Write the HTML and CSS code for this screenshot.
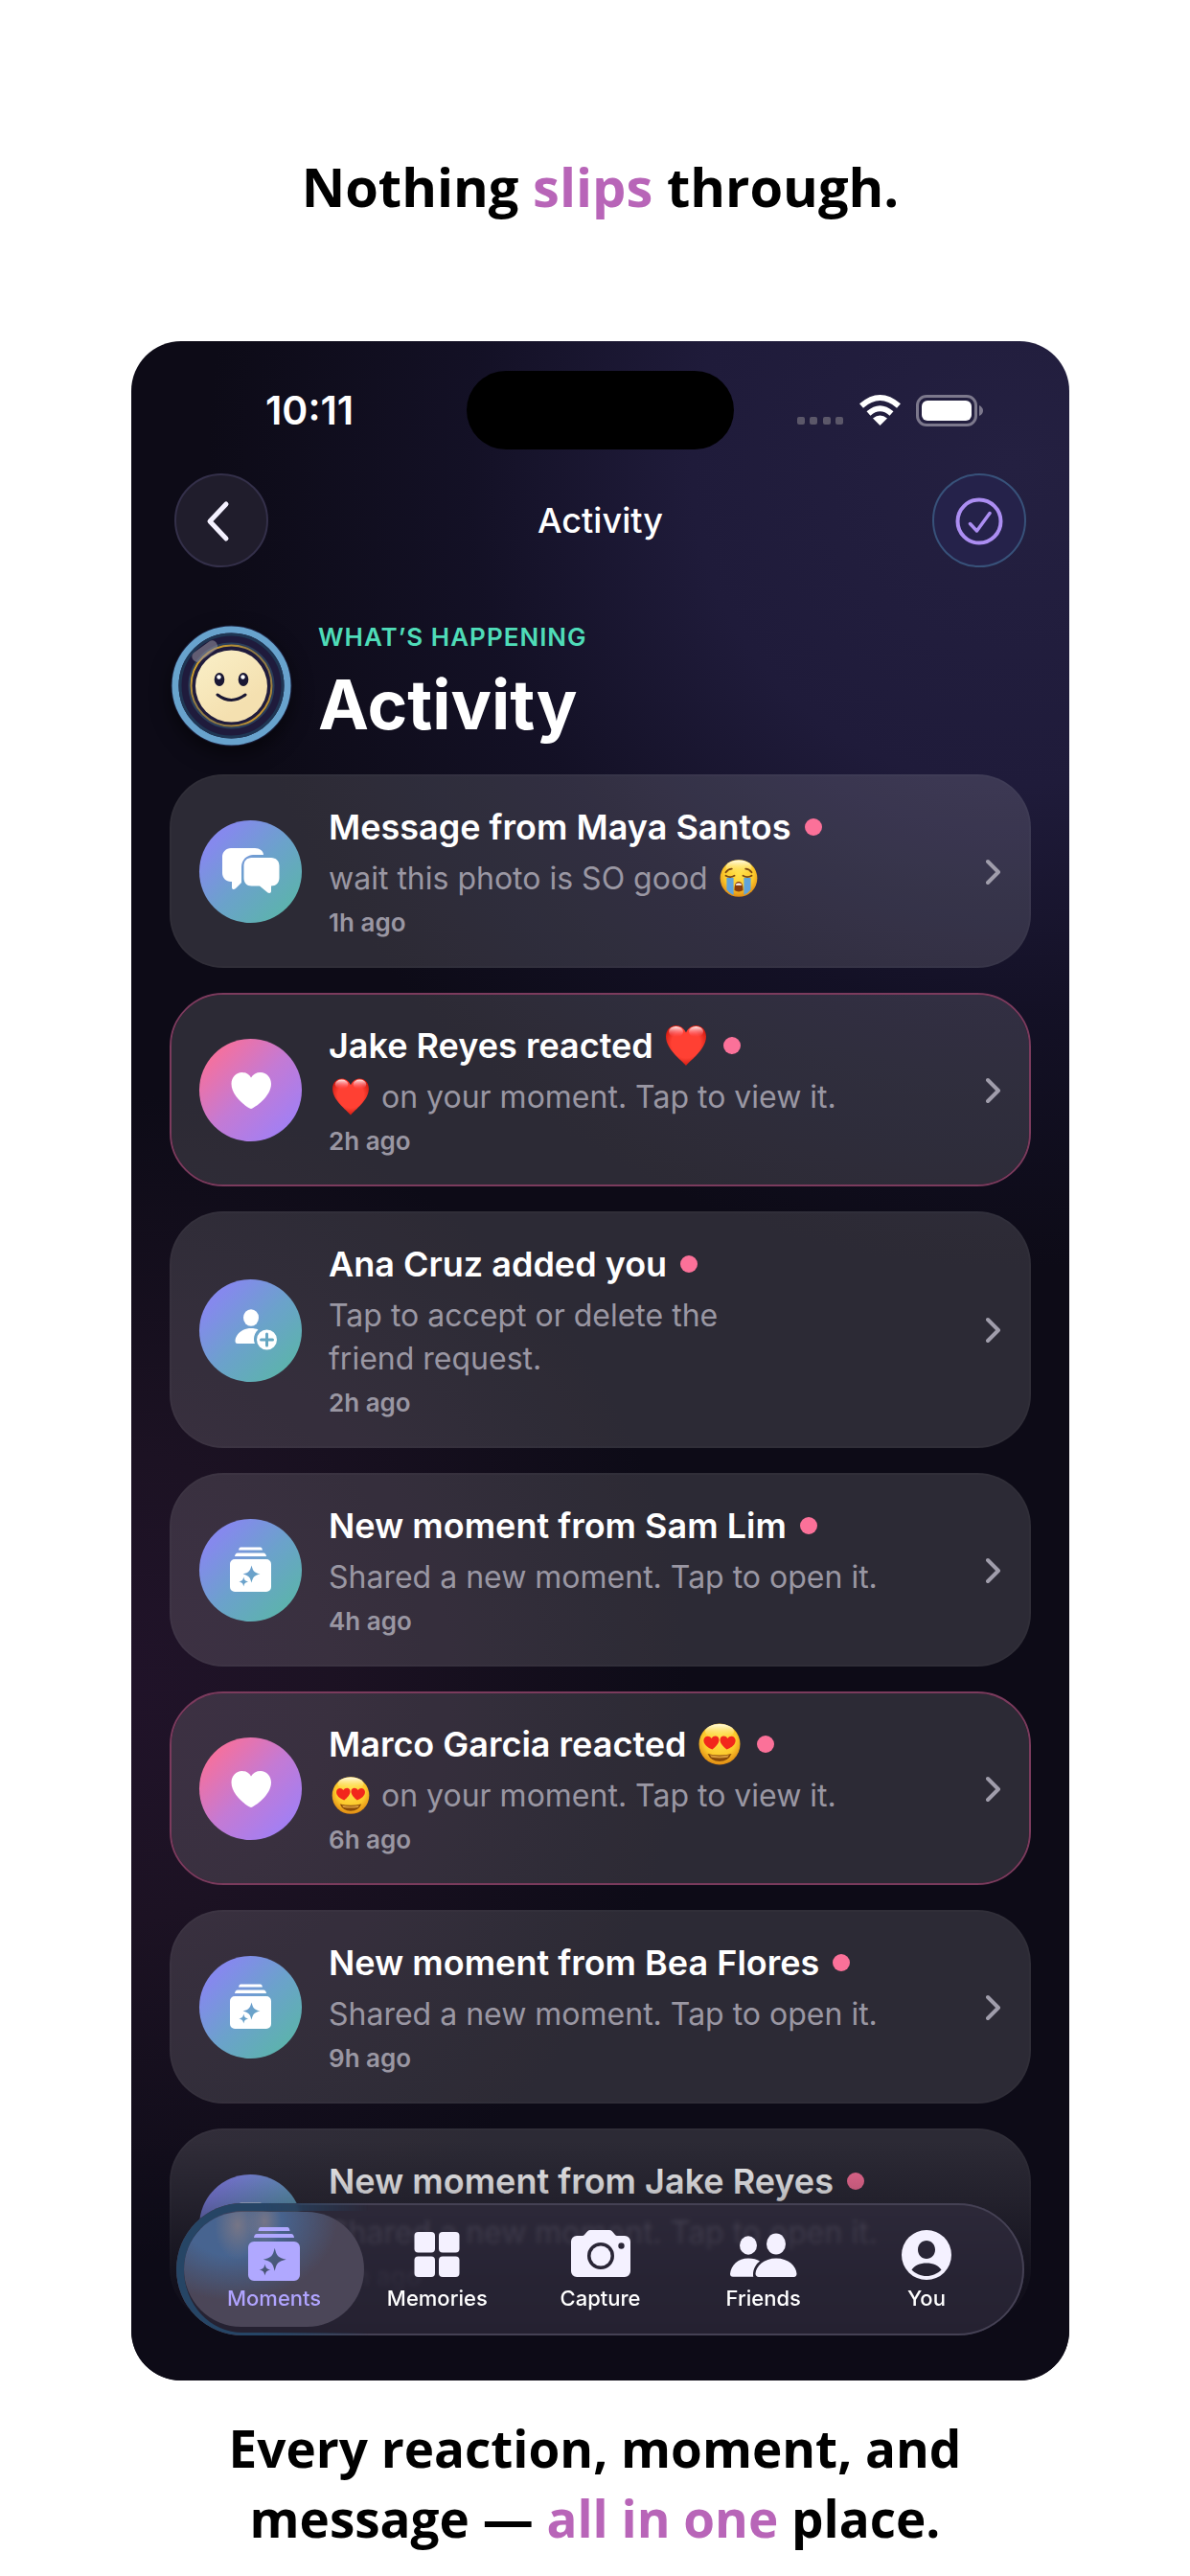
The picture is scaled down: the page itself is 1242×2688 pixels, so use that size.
FILE: index.html
```html
<!DOCTYPE html>
<html lang="en">
<head>
<meta charset="utf-8">
<meta name="viewport" content="width=device-width, initial-scale=1">
<title>Activity</title>
<link rel="stylesheet" href="styles.css">
</head>
<body>
<svg class="defs" aria-hidden="true">
  <defs>
    <radialGradient id="g-heart" cx="50%" cy="45%" r="60%">
      <stop offset="0.6" stop-color="#ff4033"/><stop offset="1" stop-color="#c81409"/>
    </radialGradient>
    <linearGradient id="g-shine" x1="0" y1="0" x2="0" y2="1">
      <stop offset="0" stop-color="#fff3ee"/><stop offset="1" stop-color="#ff5a78" stop-opacity="0"/>
    </linearGradient>
    <radialGradient id="g-face" cx="50%" cy="38%" r="62%">
      <stop offset="0" stop-color="#ffe24a"/><stop offset="0.65" stop-color="#fcc92c"/><stop offset="1" stop-color="#e08a12"/>
    </radialGradient>
    <linearGradient id="g-glow" x1="0" y1="0" x2="0" y2="1">
      <stop offset="0" stop-color="#fffbe6"/><stop offset="1" stop-color="#ffe960" stop-opacity="0"/>
    </linearGradient>
    <linearGradient id="g-moon" x1="0" y1="0" x2="0.6" y2="0.8">
      <stop offset="0" stop-color="#faf0c8"/><stop offset="1" stop-color="#f4e0b0"/>
    </linearGradient>
    <linearGradient id="g-gold" x1="0" y1="0" x2="1" y2="1">
      <stop offset="0" stop-color="#f6b51e"/><stop offset="0.4" stop-color="#8f7a45"/><stop offset="0.7" stop-color="#8f7a45"/><stop offset="1" stop-color="#f2ac1c"/>
    </linearGradient>
  </defs>
  <symbol id="i-chat" viewBox="0 0 107 107">
    <path d="M33 29H58c5 0 9 3 9 7H58c-9 0-14 5-14 13V65l-6 6c-2 2-4 1-4-1V64h-1c-5 0-9-4-9-9V38c0-5 4-9 9-9z"/>
    <path d="M54.500 39H75c5 0 8.500 3.500 8.500 8.500V60c0 5-3.500 8.500-8.500 8.500V74c0 2-2 2.500-3.500 1.500L63 68.500H54.500c-5 0-8-3.500-8-8.500V47.500c0-5 3-8.500 8-8.500z"/>
  </symbol>
  <symbol id="i-heart" viewBox="0 0 107 107">
    <path d="M54 73C50 72 33.500 60 33.500 47c0-7 5-12 11-12 4 0 7.500 2 9.500 5.500C56 37 59.500 35 64 35c6 0 11 5 11 12 0 13-17 25-21 26z"/>
  </symbol>
  <symbol id="i-add" viewBox="0 0 107 107">
    <ellipse cx="54" cy="40" rx="8" ry="8.700"/>
    <path d="M54 51c3 0 5.500.5 7.500 1.500C58.500 55 57 58.500 57 62c0 2 .3 3.500 1 5H40c-2 0-2.500-1-2.500-3C38 57 45 51 54 51z"/>
    <path fill-rule="evenodd" d="M70.500 52.500a10.500 10.500 0 1 1 0 21 10.500 10.500 0 0 1 0-21zM69 57v4.500h-4.500a1.500 1.500 0 0 0 0 3H69V69a1.500 1.500 0 0 0 3 0v-4.500h4.500a1.500 1.500 0 0 0 0-3H72V57a1.500 1.500 0 0 0-3 0z"/>
  </symbol>
  <symbol id="i-moment" viewBox="0 0 107 107">
    <path d="M43 29.500H64q1.500 0 2 3H41q.5-3 2-3zM40 35.500H67q2.500 0 3 3.500H37q.5-3.500 3-3.500z"/>
    <path fill-rule="evenodd" d="M37 42H70a5 5 0 0 1 5 5V71a5 5 0 0 1-5 5H37a5 5 0 0 1-5-5V47a5 5 0 0 1 5-5zM54.500 48.500c-1.700 6.300-2.700 7.300-9 9 6.300 1.700 7.300 2.700 9 9 1.700-6.300 2.700-7.300 9-9-6.300-1.700-7.300-2.700-9-9zM46.300 60.500c-.9 3.500-1.500 4.100-5 5 3.500.9 4.100 1.500 5 5 .9-3.500 1.500-4.100 5-5-3.500-.9-4.100-1.500-5-5z"/>
  </symbol>
  <symbol id="e-heart" viewBox="0 0 50 50">
    <path d="M25 46C20 40 4 29 4 15.500 4 9 8.500 4 14.500 4 19 4 23 7 25 11.500 27 7 31 4 35.500 4 41.500 4 46 9 46 15.500 46 29 30 40 25 46z" fill="url(#g-heart)"/>
    <ellipse cx="14.500" cy="10.500" rx="7.500" ry="5.500" fill="url(#g-shine)"/>
    <ellipse cx="35.500" cy="10.500" rx="7.500" ry="5.500" fill="url(#g-shine)"/>
  </symbol>
  <symbol id="e-cry" viewBox="0 0 50 50">
    <circle cx="25" cy="25" r="21.500" fill="url(#g-face)"/>
    <ellipse cx="25" cy="12" rx="15" ry="8" fill="url(#g-glow)"/>
    <path d="M11 24.500h8V44.500Q14 42 11 38zM31 24.500h8V38Q36 42 31 44.500z" fill="#5fa4dc"/>
    <g fill="none" stroke="#7a4510" stroke-width="2" stroke-linecap="round">
      <path d="M10 22q5 3 10 0M30 22q5 3 10 0M10 18q3-4 7-4M40 18q-3-4-7-4"/>
    </g>
    <path d="M20 39c0-8 2-10 5-10s5 2 5 10q-5 3-10 0z" fill="#8a3d0c"/>
    <path d="M21.500 32q3.500-3 7 0v1h-7z" fill="#fff"/>
  </symbol>
  <symbol id="e-love" viewBox="0 0 50 50">
    <circle cx="25" cy="25" r="21.500" fill="url(#g-face)"/>
    <ellipse cx="25" cy="11.500" rx="15" ry="7.500" fill="url(#g-glow)"/>
    <path d="M12.500 35Q25 38 37.500 35 34 43 25 43T12.500 35z" fill="#8a4a08"/>
    <path d="M15 36.300Q25 38.500 35 36.300L33.500 38.800Q25 40 16.500 38.800z" fill="#d99a3a"/>
    <path d="M17.500 30.500C13 29 7.500 25 8.500 20c1-4 6-4.500 8-1 2.500-4 8-3 8 1.500 0 4-4 7.500-7 10z" fill="#f2271c"/>
    <path d="M32.500 30.500C37 29 42.500 25 41.500 20c-1-4-6-4.500-8-1-2.500-4-8-3-8 1.500 0 4 4 7.500 7 10z" fill="#f2271c"/>
  </symbol>
</svg>

<main class="page">
  <h1 class="headline">Nothing <em>slips</em> through.</h1>

  <section class="phone">
    <div class="status">
      <span class="clock">10:11</span>
      <span class="island"></span>
      <span class="signals">
        <svg width="194" height="34" viewBox="0 0 194 34" fill="#fff" role="img" aria-label="Wi-Fi on, battery full">
          <g fill="#5b5769"><rect x="0" y="24" width="8" height="8" rx="2"/><rect x="13" y="24" width="8" height="8" rx="2"/><rect x="27" y="24" width="8" height="8" rx="2"/><rect x="40" y="24" width="8" height="8" rx="2"/></g>
          <path d="M86.500 33L79 25.500q7.500-6 15 0z"/>
          <g fill="none" stroke="#fff" stroke-width="6"><path d="M74.500 20.500q12-10.500 24 0M67 12.500q19.500-17 39 0"/></g>
          <rect x="125.500" y="2.500" width="61" height="30" rx="9.500" fill="none" stroke="#7c788c" stroke-width="3"/>
          <rect x="130" y="7" width="52" height="21" rx="6"/>
          <path d="M190 12q4 2 4 5.500t-4 5.500z" fill="#7c788c"/>
        </svg>
      </span>
    </div>

    <header class="navbar">
      <button class="round" type="button" aria-label="Back">
        <svg width="94" height="94" viewBox="2 2 94 94" fill="none" stroke="#f4f1ff" stroke-width="5" stroke-linecap="round" stroke-linejoin="round"><path d="M54 32L37 50l17 18"/></svg>
      </button>
      <h2 class="navbar-title">Activity</h2>
      <button class="round round-accent" type="button" aria-label="Mark all as read">
        <svg width="94" height="94" viewBox="2 2 94 94" fill="none" stroke="#ac8ef2" stroke-width="4" stroke-linecap="round" stroke-linejoin="round"><circle cx="49" cy="50" r="22.500"/><path d="M39.500 52.500l7 7.500L60 41.500" stroke-width="3.500"/></svg>
      </button>
    </header>

    <div class="intro">
      <svg class="avatar" viewBox="0 0 127 127" role="img" aria-label="Your avatar">
        <circle cx="63.500" cy="63.500" r="63" fill="#1c2340"/>
        <circle cx="63.500" cy="63.500" r="58.500" fill="#1f1b3c" stroke="#68a3cd" stroke-width="7"/>
        <circle cx="63.500" cy="63.500" r="53.500" fill="none" stroke="#1f3653" stroke-width="3"/>
        <circle cx="63.500" cy="63.500" r="44" fill="none" stroke="#2a3f5c" stroke-width="2"/>
        <circle cx="63.500" cy="63.500" r="42" fill="none" stroke="url(#g-gold)" stroke-width="2"/>
        <circle cx="63.500" cy="64" r="37.500" fill="url(#g-moon)"/>
        <rect x="21" y="22" width="30" height="11" rx="5" fill="#8d8a98" opacity="0.6" transform="rotate(-36 36 28)"/>
        <g fill="#1a1733"><ellipse cx="51" cy="57" rx="5.300" ry="7"/><ellipse cx="76" cy="57" rx="5.300" ry="7"/></g>
        <g fill="#fff"><circle cx="50.500" cy="54.500" r="2.200"/><circle cx="75.500" cy="54.500" r="2.200"/></g>
        <path d="M49 73q14.500 11 29 0" fill="none" stroke="#1a1733" stroke-width="3" stroke-linecap="round"/>
      </svg>
      <div class="intro-text">
        <p class="eyebrow">WHAT’S HAPPENING</p>
        <p class="title">Activity</p>
      </div>
    </div>

    <ul class="feed">
      <li><a class="card" href="#maya">
        <svg class="badge cool"><use href="#i-chat"/></svg>
        <span class="body"><span class="name">Message from Maya Santos<i class="dot"></i></span>
          <span class="detail">wait this photo is SO good <svg class="emoji" role="img" aria-label="😭"><use href="#e-cry"/></svg></span>
          <span class="when">1h ago</span></span>
        <svg class="go" viewBox="0 0 16 28"><path d="M2 3l11 11L2 25"/></svg>
      </a></li>
      <li><a class="card reaction" href="#jake">
        <svg class="badge warm"><use href="#i-heart"/></svg>
        <span class="body"><span class="name">Jake Reyes reacted <svg class="emoji" role="img" aria-label="❤️"><use href="#e-heart"/></svg><i class="dot"></i></span>
          <span class="detail"><svg class="emoji" role="img" aria-label="❤️"><use href="#e-heart"/></svg> on your moment. Tap to view it.</span>
          <span class="when">2h ago</span></span>
        <svg class="go" viewBox="0 0 16 28"><path d="M2 3l11 11L2 25"/></svg>
      </a></li>
      <li><a class="card" href="#ana">
        <svg class="badge cool"><use href="#i-add"/></svg>
        <span class="body"><span class="name">Ana Cruz added you<i class="dot"></i></span>
          <span class="detail">Tap to accept or delete the<br>friend request.</span>
          <span class="when">2h ago</span></span>
        <svg class="go" viewBox="0 0 16 28"><path d="M2 3l11 11L2 25"/></svg>
      </a></li>
      <li><a class="card" href="#sam">
        <svg class="badge cool"><use href="#i-moment"/></svg>
        <span class="body"><span class="name">New moment from Sam Lim<i class="dot"></i></span>
          <span class="detail">Shared a new moment. Tap to open it.</span>
          <span class="when">4h ago</span></span>
        <svg class="go" viewBox="0 0 16 28"><path d="M2 3l11 11L2 25"/></svg>
      </a></li>
      <li><a class="card reaction" href="#marco">
        <svg class="badge warm"><use href="#i-heart"/></svg>
        <span class="body"><span class="name">Marco Garcia reacted <svg class="emoji" role="img" aria-label="😍"><use href="#e-love"/></svg><i class="dot"></i></span>
          <span class="detail"><svg class="emoji" role="img" aria-label="😍"><use href="#e-love"/></svg> on your moment. Tap to view it.</span>
          <span class="when">6h ago</span></span>
        <svg class="go" viewBox="0 0 16 28"><path d="M2 3l11 11L2 25"/></svg>
      </a></li>
      <li><a class="card" href="#bea">
        <svg class="badge cool"><use href="#i-moment"/></svg>
        <span class="body"><span class="name">New moment from Bea Flores<i class="dot"></i></span>
          <span class="detail">Shared a new moment. Tap to open it.</span>
          <span class="when">9h ago</span></span>
        <svg class="go" viewBox="0 0 16 28"><path d="M2 3l11 11L2 25"/></svg>
      </a></li>
      <li><a class="card" href="#jake-moment">
        <svg class="badge cool"><use href="#i-moment"/></svg>
        <span class="body"><span class="name">New moment from Jake Reyes<i class="dot"></i></span>
          <span class="detail">Shared a new moment. Tap to open it.</span>
          <span class="when">12h ago</span></span>
      </a></li>
    </ul>

    <div class="fade"></div>
    <nav class="tabs">
      <a class="tab current" href="#moments" aria-current="page">
        <svg viewBox="0 0 72 56"><path d="M22 0H50q2 0 2.500 4H19.500q.5-4 2.500-4zM18 7H54q2.500 0 3 4H15q.5-4 3-4z"/><path fill-rule="evenodd" d="M15 15H57a6 6 0 0 1 6 6V50a6 6 0 0 1-6 6H15a6 6 0 0 1-6-6V21a6 6 0 0 1 6-6zM36.700 21.700c-2 8.500-3.500 10-12 12 8.500 2 10 3.500 12 12 2-8.500 3.500-10 12-12-8.500-2-10-3.500-12-12zM26.500 38.500c-1 4.300-1.700 5-6 6 4.300 1 5 1.700 6 6 1-4.300 1.700-5 6-6-4.300-1-5-1.700-6-6z"/></svg>
        <span>Moments</span></a>
      <a class="tab" href="#memories">
        <svg viewBox="0 0 72 56"><rect x="12.500" y="5" width="21.500" height="21.500" rx="4"/><rect x="38" y="5" width="21.500" height="21.500" rx="4"/><rect x="12.500" y="30.500" width="21.500" height="21.500" rx="4"/><rect x="38" y="30.500" width="21.500" height="21.500" rx="4"/></svg>
        <span>Memories</span></a>
      <a class="tab" href="#capture">
        <svg viewBox="0 0 72 56"><path fill-rule="evenodd" d="M11 9h6c3 0 4-6 8-6H45c4 0 5 6 8 6h8a6 6 0 0 1 6 6V46a6 6 0 0 1-6 6H11a6 6 0 0 1-6-6V15a6 6 0 0 1 6-6zM36 16a14 14 0 1 0 0 28 14 14 0 0 0 0-28zM57.500 16.300a3.200 3.200 0 1 0 0 6.400 3.200 3.200 0 0 0 0-6.400z"/><circle cx="36" cy="30" r="10.500"/></svg>
        <span>Capture</span></a>
      <a class="tab" href="#friends">
        <svg viewBox="0 0 72 56"><ellipse cx="20" cy="19" rx="9" ry="9.700"/><ellipse cx="49" cy="17.500" rx="10" ry="11"/><path d="M20 32.500c5 0 9 1 12 3-4 3-7 8-7 14 0 1 0 1.500.3 2.300H4c-2 0-3-1-3-3C2 40 9 32.500 20 32.500zM49 32.500c13 0 21 8 21.500 16 0 2-1 3.500-3 3.500H31c-2 0-3.500-1.500-3.500-3.500.5-8 9-16 21.500-16z"/></svg>
        <span>Friends</span></a>
      <a class="tab" href="#you">
        <svg viewBox="0 0 72 56"><path fill-rule="evenodd" d="M36 3a26 26 0 1 1 0 52 26 26 0 0 1 0-52zM36 14c-5 0-9 4-9 9.500s4 9.500 9 9.500 9-4 9-9.500-4-9.500-9-9.500zM36 37.500c-7 0-12.500 2.500-15.500 7 4 4 9.500 6.500 15.500 6.500s11.500-2.500 15.500-6.500c-3-4.500-8.500-7-15.500-7z"/></svg>
        <span>You</span></a>
    </nav>
  </section>

  <p class="footline">Every reaction, moment, and<br>message — <em>all in one</em> place.</p>
</main>
</body>
</html>
```
FILE: styles.css
```css
* { box-sizing: border-box; margin: 0; padding: 0; }
body { background: #fff; font-family: Inter, "Liberation Sans", sans-serif; }
a { color: inherit; text-decoration: none; }
.defs { position: absolute; width: 0; height: 0; }

.headline, .footline { font-family: "Open Sans", "Noto Sans", sans-serif; font-weight: 700; text-align: center; color: #000; }
.headline em, .footline em { font-style: normal; color: #b865b8; }
.headline { padding: 156px 126px 124px 137px; font-size: 56px; line-height: 76px; }
.footline { padding: 34px 40px 24px; font-size: 53px; line-height: 73px; }

.phone {
  position: relative;
  margin: 0 126px 0 137px;
  aspect-ratio: 979 / 2128;
  overflow: hidden;
  border-radius: 52px;
  color: #fff;
  background:
    radial-gradient(circle 840px at 94% 6%, #242041 0%, #1f1b3a 40%, rgba(21, 18, 41, 0.8) 68%, rgba(13, 11, 23, 0) 100%),
    radial-gradient(circle 620px at -4% 66%, #21132a 0%, #1c1223 40%, rgba(13, 11, 23, 0) 100%),
    #0d0b17;
}

.status { display: grid; grid-template-columns: 1fr 279px 1fr; align-items: center; padding-top: 31px; }
.clock { padding-left: 140px; font-size: 41px; line-height: 48px; font-weight: 600; }
.island { height: 82px; border-radius: 41px; background: #000; }
.signals { display: flex; justify-content: flex-end; padding-right: 90px; }

.navbar { display: flex; align-items: center; justify-content: space-between; padding: 25px 45px 0; }
.navbar-title { font-size: 36px; line-height: 48px; font-weight: 500; }
.round { width: 98px; height: 98px; border: 2px solid #34304a; border-radius: 50%; background: #201d2c; }
.round svg { display: block; }
.round-accent { border-color: #38527a; background: #25224a; }

.intro { display: flex; align-items: center; gap: 27px; padding: 57px 41px 0; }
.avatar { width: 127px; height: 127px; border-radius: 50%; box-shadow: 0 8px 20px rgba(0, 0, 0, 0.5); }
.eyebrow { font-size: 26px; line-height: 32px; font-weight: 600; color: #4fdcb8; letter-spacing: 1px; }
.title { margin-top: 8px; font-size: 71px; line-height: 92px; font-weight: 700; }

.feed { display: grid; gap: 26px; padding: 27px 40px 0; list-style: none; }
.card {
  display: flex;
  align-items: center;
  gap: 28px;
  padding: 28px 29px 27px;
  border: 2px solid rgba(255, 255, 255, 0.02);
  border-radius: 56px;
  background: rgba(255, 255, 255, 0.13);
}
.reaction { border-color: #7b3b5d; background-clip: padding-box; }
.badge { flex: none; width: 107px; height: 107px; border-radius: 50%; fill: #fff; }
.cool { background: linear-gradient(135deg, #8589ed 18%, #6ba2cb 52%, #5db2ae 85%); }
.warm { background: linear-gradient(135deg, #fb6f97 10%, #c47ad4 50%, #a37ff2 85%); }
.body { flex: 1; display: flex; flex-direction: column; }
.name { display: flex; align-items: center; font-size: 36px; line-height: 50px; font-weight: 600; white-space: pre; }
.detail { margin-top: 6px; font-size: 32px; line-height: 45px; color: #9a97a3; }
.when { margin-top: 6px; font-size: 26px; line-height: 36px; font-weight: 600; color: #9a97a3; }
.dot { width: 18px; height: 18px; margin-left: 14px; border-radius: 50%; background: #fb7199; }
.emoji { width: 46px; height: 45px; vertical-align: bottom; }
.name .emoji { width: 50px; height: 50px; }
.go { flex: none; width: 16px; height: 28px; fill: none; stroke: #a09dab; stroke-width: 4; stroke-linecap: round; stroke-linejoin: round; }

.fade { position: absolute; inset: auto 0 0; height: 250px; background: linear-gradient(rgba(13, 11, 23, 0), rgba(13, 11, 23, 0.3) 25%, rgba(13, 11, 23, 0.85) 60%, #0d0b17); }

/* Glass tab bar floating over the end of the feed */
.tabs {
  position: absolute;
  inset: auto 47px 47px;
  display: flex;
  padding: 0 17px;
  border-radius: 69px;
  background: rgba(50, 46, 64, 0.66);
  box-shadow: inset 0 0 0 2px #454154;
  backdrop-filter: blur(2px);
}
.tabs::before {
  content: "";
  position: absolute;
  inset: 0;
  border: 8px solid #264565;
  border-right-color: transparent;
  border-bottom-width: 3px;
  border-radius: inherit;
  mask-image: linear-gradient(to right, #000 90px, transparent 200px);
}
.tab {
  position: relative;
  flex: 1;
  display: flex;
  flex-direction: column;
  align-items: center;
  gap: 2px;
  padding: 25px 0 23px;
  font-size: 22px;
  line-height: 32px;
  font-weight: 500;
}
.tab svg { position: relative; width: 72px; height: 56px; fill: #f4f1ff; }
.tab span { position: relative; }
.current { color: #b0a4ff; }
.current svg { fill: #b0a8ff; }
.current::before {
  content: "";
  position: absolute;
  inset: 9px -9px;
  border-radius: 60px;
  background:
    radial-gradient(ellipse 24px 36px at 56px 14px, rgba(130, 122, 132, 0.8), transparent),
    radial-gradient(ellipse 18px 30px at 84px 10px, rgba(130, 122, 132, 0.8), transparent),
    radial-gradient(ellipse 110px 84px at 50px 8px, #476490 45%, transparent),
    #4b4658;
}
```
